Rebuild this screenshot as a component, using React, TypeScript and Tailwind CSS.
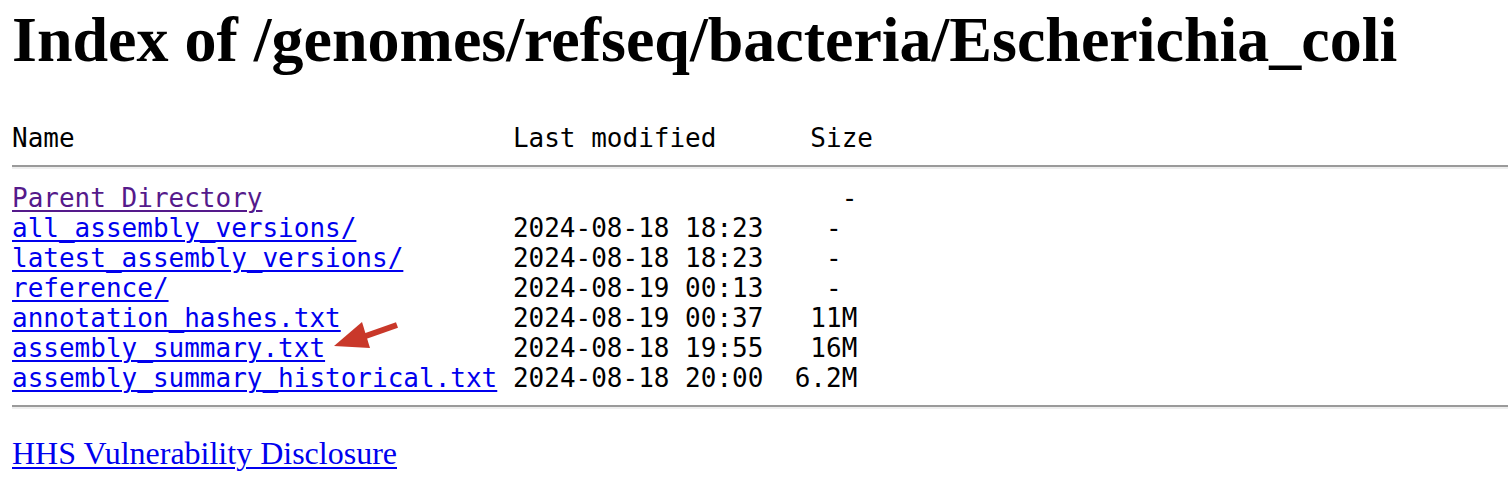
import React from 'react';

const rows: [string, string][] = [
  ['all_assembly_versions/', '2024-08-18 18:23    -'],
  ['latest_assembly_versions/', '2024-08-18 18:23    -'],
  ['reference/', '2024-08-19 00:13    -'],
  ['annotation_hashes.txt', '2024-08-19 00:37   11M'],
  ['assembly_summary.txt', '2024-08-18 19:55   16M'],
  ['assembly_summary_historical.txt', '2024-08-18 20:00  6.2M'],
];

const linkCls = 'text-[#0000ee] underline decoration-2 underline-offset-[3px]';

const Rule = () => (
  <div className="border-t-2 border-b-2 border-t-[#9a9a9a] border-b-[#eeeeee]" />
);

const App = () => {
  return (
    <div className="relative min-h-[498px] bg-white pl-[12px] pt-[4px] text-black">
      <h1 className="m-0 font-['Liberation_Serif','Times_New_Roman',serif] text-[64px] font-bold leading-[72px] whitespace-nowrap">
        Index of /genomes/refseq/bacteria/Escherichia_coli
      </h1>

      <pre className="m-0 mt-[47px] font-['DejaVu_Sans_Mono',monospace] text-[26px] leading-[30px]">
        {'Name' + ' '.repeat(28) + 'Last modified' + ' '.repeat(6) + 'Size'}
      </pre>

      <div className="mt-[12px]">
        <Rule />
      </div>

      <pre className="m-0 mt-[14px] font-['DejaVu_Sans_Mono',monospace] text-[26px] leading-[30px]">
        <a href="#" className="text-[#551a8b] underline decoration-2 underline-offset-[3px]">Parent Directory</a>
        {' '.repeat(37) + '-'}
        {'\n'}
        {rows.map(([name, rest]) => (
          <React.Fragment key={name}>
            <a href="#" className={linkCls}>{name}</a>
            {' '.repeat(32 - name.length) + rest}
            {'\n'}
          </React.Fragment>
        ))}
      </pre>

      <div className="mt-[12px]">
        <Rule />
      </div>

      <div className="mt-[26px] font-['Liberation_Serif','Times_New_Roman',serif] text-[32px] leading-[36px]">
        <a href="#" className="text-[#0000ee] underline decoration-2 underline-offset-[3px]">HHS Vulnerability Disclosure</a>
      </div>

      {/* red annotation arrow */}
      <svg className="absolute left-[330px] top-[315px]" width="75" height="40" viewBox="0 0 75 40">
        <line x1="67" y1="10" x2="30" y2="23" stroke="#c9382a" strokeWidth="6" />
        <polygon points="4,31 32,7 40,33" fill="#c9382a" />
      </svg>
    </div>
  );
};

export default App;
